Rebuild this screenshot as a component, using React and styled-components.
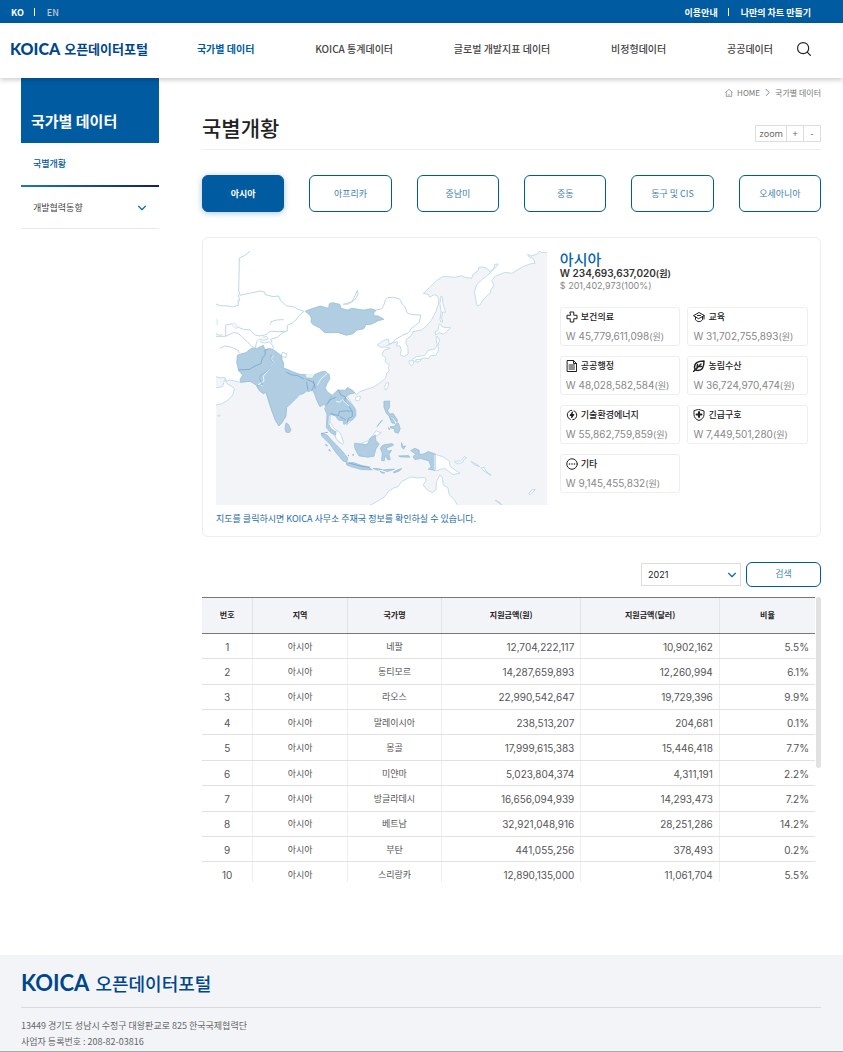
import React, { useState } from 'react'
import styled, { createGlobalStyle, css } from 'styled-components'

const noto = '"Noto Sans CJK KR", "Noto Sans", sans-serif'
const inter = 'Inter, "Noto Sans CJK KR", sans-serif'

const GlobalStyle = createGlobalStyle`
* { box-sizing: border-box; }
body {
    margin: 0;
    background: #fff;
    color: #555;
    font-family: ${noto};
    font-size: 9px;
    line-height: 16px;
}
a { color: inherit; text-decoration: none; }
button, select { font: inherit; margin: 0; cursor: pointer; }
ul, h1, h2, h3, p { margin: 0; padding: 0; list-style: none; }
`

const TopBar = styled.div`
display: flex;
justify-content: space-between;
align-items: center;
height: 23px;
padding: 2px 32px 0 11px;
background: #005ba1;
color: #fff;
font-weight: 700;
`
const TopLinks = styled.div`
display: flex;
align-items: center;
`
const TopLink = styled.a`
color: ${props => props.$dim ? '#c3c8cc' : '#fff'};
font-weight: ${props => props.$dim ? 500 : 700};
`
const Divider = styled.span`
width: 1px;
height: 8px;
margin: 0 12px 2px 10px;
background: #fff;
`
const Header = styled.header`
position: relative;
display: flex;
align-items: center;
height: 55px;
padding: 0 32px 3px 10px;
background: #fff;
box-shadow: 0 2px 5px rgba(0, 0, 0, 0.2);
`
const Logo = styled.a`
display: flex;
align-items: center;
gap: ${props => props.$large ? 6 : 4}px;
color: #00468c;
font-weight: ${props => props.$large ? 500 : 700};
font-size: ${props => props.$large ? 18 : 13}px;
line-height: 24px;
white-space: nowrap;

b {
    font-family: Lato, sans-serif;
    font-size: ${props => props.$large ? 22 : 16}px;
}
`
const Nav = styled.nav`
display: flex;
flex: 1;
justify-content: space-between;
margin: 0 24px 0 49px;
font-size: 10px;
white-space: nowrap;
`
const NavLink = styled.a`
color: ${props => props.$active ? '#005ba1' : '#444'};
font-weight: ${props => props.$active ? 700 : 500};
`
const IconButton = styled.button`
display: flex;
padding: 0;
border: 0;
background: none;
color: #222;
`
const Page = styled.div`
display: grid;
grid-template-columns: 138px minmax(0, 1fr);
gap: 43px;
padding: 0 22px 0 21px;
`
const SideTitle = styled.h2`
height: 65px;
padding: 31px 10px 0;
background: #005ba1;
color: #fff;
font-size: 15px;
line-height: 24px;
`
const SideLink = styled.a`
display: flex;
justify-content: space-between;
align-items: center;
height: 42px;
padding: 0 13px 0 12px;
border-bottom: 1px solid #e9e9e9;
color: #444;

${props => props.$active && css`
    height: 44px;
    border-bottom: 2px solid;
    border-image: linear-gradient(90deg, #1b76ce, #141f5e) 1;
    color: #005ba1;
    font-weight: 500;
`}
`
const Breadcrumb = styled.nav`
display: flex;
justify-content: flex-end;
align-items: center;
gap: 4px;
height: 29px;
color: #777;
font-size: 8px;
`
const TitleRow = styled.div`
display: flex;
justify-content: space-between;
align-items: flex-end;
height: 43px;
padding-bottom: 7px;
border-bottom: 1px solid #eee;
`
const Title = styled.h1`
padding-bottom: 1px;
color: #222;
font-size: 21px;
font-weight: 500;
line-height: 28px;
`
const ZoomBox = styled.div`
display: flex;
height: 17px;
border: 1px solid #ddd;
color: #666;
font-family: "Noto Sans", sans-serif;
line-height: 16px;

span { padding: 0 3px; }
button {
    width: 17px;
    padding: 0;
    border: 0;
    border-left: 1px solid #ddd;
    background: none;
    color: #666;
}
`
const Tabs = styled.div`
display: grid;
grid-template-columns: repeat(6, 1fr);
gap: 25px;
margin: 25px 0;
`
const Tab = styled.button`
height: 37px;
padding: 0;
border: 1px solid #005ba1;
border-radius: 6px;
background: ${props => props.$active ? '#005ba1' : '#fff'};
color: ${props => props.$active ? '#fff' : '#3f82b5'};
font-weight: ${props => props.$active ? 700 : 400};
box-shadow: ${props => props.$active ? '0 1px 6px rgba(0, 91, 161, 0.35)' : 'none'};
`
const Overview = styled.section`
display: grid;
grid-template-columns: 4fr 3fr;
gap: 13px;
padding: 13px 12px 9px 13px;
border: 1px solid #eee;
border-radius: 6px;
`
const MapSvg = styled.svg`
display: block;
width: 100%;
background: #f3f4f8;
`
const MapNote = styled.p`
margin-top: 6px;
color: #1d6dab;
`
const RegionName = styled.h2`
color: #0b67ac;
font-size: 15px;
font-weight: 500;
line-height: 16px;
`
const Total = styled.p`
color: ${props => props.$sub ? '#888' : '#333'};
font-family: ${inter};
font-size: ${props => props.$sub ? 9 : 10}px;
font-weight: ${props => props.$sub ? 400 : 600};
line-height: 12px;

small { font-size: 9px; }
`
const SectorGrid = styled.div`
display: grid;
grid-template-columns: 1fr 1fr;
gap: 10px 7px;
margin-top: 15px;
`
const SectorCard = styled.div`
height: 39px;
padding: 1px 5px;
border: 1px solid #eee;
border-radius: 3px;

h3 {
    display: flex;
    align-items: center;
    gap: 3px;
    color: #222;
    font-size: 9px;
    font-weight: 500;
    line-height: 16px;
}
p {
    margin-top: 3px;
    color: #888;
    font-family: ${inter};
    font-size: 10px;
    line-height: 16px;
}
small { font-size: 9px; }
`
const Filter = styled.form`
display: flex;
justify-content: flex-end;
align-items: center;
gap: 5px;
margin: 25px 0 10px;
`
const SelectWrap = styled.label`
position: relative;
width: 100px;

svg {
    position: absolute;
    right: 5px;
    top: 8px;
    pointer-events: none;
}
`
const Select = styled.select`
display: block;
width: 100%;
height: 23px;
padding: 1px 6px 0;
border: 1px solid #ddd;
border-radius: 0;
background: #fff;
appearance: none;
color: #222;
font-family: ${inter};
`
const SearchButton = styled.button`
width: 75px;
height: 25px;
border: 1px solid #005ba1;
border-radius: 6px;
background: #fff;
color: #4787b5;
`
const TableArea = styled.div`
display: flex;
gap: 1px;
height: 285px;
`
const Scroller = styled.div`
flex: 1;
overflow-y: auto;
scrollbar-width: none;
`
const ScrollThumb = styled.div`
width: 5px;
height: 60%;
border-radius: 3px;
background: #e1e1e1;
`
const Table = styled.table`
width: 100%;
height: 291px;
border-collapse: collapse;
table-layout: fixed;
font-family: ${inter};
line-height: 12px;

th {
    height: 36px;
    padding: 0;
    border-top: 1px solid #777;
    border-bottom: 1px solid #777;
    background: #f3f4f8;
    color: #222;
    font-family: ${noto};
    font-size: 8px;
    font-weight: 700;
}
td {
    padding: 1px 6px 0;
    border-bottom: 1px solid #e1e1e1;
    text-align: center;
    font-size: 10px;
}
th + th, td + td { border-left: 1px solid #e4e4e8; }
td + td { border-left-color: #eee; }
td:nth-child(2), td:nth-child(3) { font-size: 9px; }
td:nth-child(n + 4) { text-align: right; }
`
const Footer = styled.footer`
height: 97px;
margin-top: 73px;
padding: 16px 22px 0 21px;
border-bottom: 1px solid #aaa;
background: #f3f4f8;
color: #666;
`
const Address = styled.div`
margin-top: 12px;
padding-top: 10px;
border-top: 1px solid #d8dade;
font-size: 9px;
line-height: 16px;
`

const Line = ({ size = 12, children, width = 2 }) => (
    <svg width={size} height={size} viewBox="0 0 24 24" fill="none" stroke="currentColor" strokeWidth={width} strokeLinejoin="round" strokeLinecap="round" aria-hidden="true">
        {children}
    </svg>
)

const Chevron = () => (
    <Line size={8} width={4}><path d="M2 7l10 10L22 7" stroke="#1470b3" /></Line>
)

const icons = {
    health: <path d="M8.500 2h7v6.500H22v7h-6.500V22h-7v-6.500H2v-7h6.500z" />,
    edu: <><path d="M1.500 9L12 3l10.500 6L12 15z" /><path d="M5 12v5.500c4 5 10 5 14 0V12M22 9v7M9 9h6" /></>,
    admin: <><path d="M3 1h12l6 6v16H3zM15 1v6h6" /><path d="M6 10h11M6 14h11M6 18h11" /></>,
    farm: <><path d="M22 2C9 2 3 6 3 14c0 4 3 7 7 7 8 0 12-7 12-19z" strokeWidth="3" /><path d="M1 23L16 8M8 16l1-7M11 13h6" strokeWidth="3" /></>,
    energy: <><circle cx="12" cy="12" r="9.500" strokeDasharray="25 5" strokeDashoffset="12" /><path d="M13 6l-5 7h4l-1 5 5-7h-4z" fill="currentColor" /></>,
    rescue: <><path d="M12 1l10 3v7c0 6-4 10-10 12C6 21 2 17 2 11V4z" /><path d="M12 6v10M7 11h10" strokeWidth="4" /></>,
    etc: <><circle cx="12" cy="12" r="10.500" /><path d="M7 12h.1M12 12h.1M17 12h.1" strokeWidth="3" /></>,
}

const sectors = [
    ['health', '보건의료', '45,779,611,098'],
    ['edu', '교육', '31,702,755,893'],
    ['admin', '공공행정', '48,028,582,584'],
    ['farm', '농림수산', '36,724,970,474'],
    ['energy', '기술환경에너지', '55,862,759,859'],
    ['rescue', '긴급구호', '7,449,501,280'],
    ['etc', '기타', '9,145,455,832'],
]

const rows = [
    ['네팔', '12,704,222,117', '10,902,162', '5.5%'],
    ['동티모르', '14,287,659,893', '12,260,994', '6.1%'],
    ['라오스', '22,990,542,647', '19,729,396', '9.9%'],
    ['말레이시아', '238,513,207', '204,681', '0.1%'],
    ['몽골', '17,999,615,383', '15,446,418', '7.7%'],
    ['미얀마', '5,023,804,374', '4,311,191', '2.2%'],
    ['방글라데시', '16,656,094,939', '14,293,473', '7.2%'],
    ['베트남', '32,921,048,916', '28,251,286', '14.2%'],
    ['부탄', '441,055,256', '378,493', '0.2%'],
    ['스리랑카', '12,890,135,000', '11,061,704', '5.5%'],
]

const columns = [['번호', '8.3%'], ['지역', '15.4%'], ['국가명', '15.4%'], ['지원금액(원)', '22.7%'], ['지원금액(달러)', '22.6%'], ['비율', '15.6%']]

const regions = ['아시아', '아프리카', '중남미', '중동', '동구 및 CIS', '오세아니아']

const AsiaMap = () => (
    <MapSvg viewBox="18 33 993 762" role="img" aria-label="아시아">
        <g fill="#fff" stroke="#c4dcec" strokeWidth="3" strokeLinejoin="round">
            {/* mainland */}
            <path d="M10 20H1020V38L995 37 988 34 982 42 965 48 953 43 957 50 970 55 976 70 960 72 940 80 922 90 907 100 885 97 870 104 857 108 845 122 853 135 843 150 841 160 830 168 820 180 810 195 802 198 798 180 794 155 800 135 815 120 830 108 842 98 860 80 865 72 855 73 852 85 840 95 832 85 818 81 807 82 805 92 790 102 785 115 765 112 755 107 735 112 700 109 680 122 660 142 640 160 655 163 660 172 670 165 680 165 687 178 685 195 678 215 665 240 650 258 635 270 620 273 608 275 606 285 590 298 588 310 594 322 595 342 582 350 571 345 574 330 570 318 560 318 563 306 548 308 538 312 535 297 520 302 502 315 512 322 528 321 541 325 522 331 516 344 528 355 525 365 538 374 535 385 538 392 530 402 527 415 515 425 505 432 490 442 470 448 450 455 440 464 432 457 424 458 412 470 425 490 438 510 438 530 425 542 410 555 405 545 395 540 385 530 370 525 362 520 360 545 372 565 390 580 400 605 398 612 385 605 372 585 358 565 358 540 357 520 350 500 345 490 330 500 322 480 315 460 305 450 290 455 272 465 255 480 240 495 228 505 228 530 215 550 207 558 195 540 185 510 175 480 168 458 160 462 148 452 138 435 120 424 90 427 72 423 60 420 50 424 45 412 30 414 10 408z" />
            <path d="M10 445L38 440 44 418 50 430 74 446 68 465 55 480 35 492 10 497z" />
            {/* Sakhalin, Japan, Taiwan, Hainan */}
            <path d="M693 168l5 3 1 20 8 26-9-1-3 18 4 12-6 0-3-8 4-22-4-25z" />
            <path d="M688 252l12 10 22 1-11 11-9 9-14-5-10 7-3-9 9-4z" />
            <path d="M681 288l8 12-5 17 2 14-8 15-16 1-6 9-14-2-12 5-16 6-7-6 12-9 25-3 11-16 20-4 7-12-3-16z" />
            <path d="M597 363l12-1 2 8-7 8-6-8zM618 359l17-1-5 6-12 3z" />
            <path d="M528 430l8-2-1 11-7 12-5-8zM436 473l9-5 8 3-5 10-9 2z" />
            {/* Malaysia, Brunei */}
            <path d="M455 610l20-8 15-17 8-13 16 7-12 8-14 4-12 19-14 5z" />
            <path d="M373 575l10-2 9 8 9 28-4 4-18-16z" />
            {/* Papua New Guinea, Solomons, Pacific islands */}
            <path d="M675 643l25 8 19 13 2 16 29 20-21 4-24-18-13 2-12 5-5-5z" />
            <path d="M735 664l18-1 10-13 8 4-8 3-4 10-14 5-9-4z" />
            <path d="M784 665l15 8 10 7-17-6zM814 684l9-1 7 13 14 10-9-4-14-10zM958 760l7-9 11-3-7 9-10 8zM856 781l14 7 10 11z" strokeWidth="2" stroke="#a5c9e1" />
            {/* Australia */}
            <path d="M478 798l25-14 22-14 10-15 15-10 15-5 10-15 20-10 10-4 15 3 25-1 4 7-9 16 13 15 14 7 11-7 2-26 10-20 8 10 2 20 14 8 4 21 15 16 12 18z" />
        </g>
        <g fill="#b0cde1" stroke="#8fb9d7" strokeWidth="2" strokeLinejoin="round">
            {/* Mongolia */}
            <path d="M286 214l19-8 26-8 25 7 2-14 10-3 22 5 3 12 20 5 13-5 35 5 22-4 15 5-7 9 2 7 12 1 17 10-16 4-22 11-16 1-7 13-19 3-14 12-19 4-24-8h-41l-15-14-21-11-5-8 1-11-5-9z" />
            {/* South Asia, Myanmar */}
            <path d="M82 346L92 342 108 338 124 325 142 325 160 316 165 330 178 325 190 329 202 338 216 348 216 358 222 372 220 384 232 388 250 396 270 403 288 404 290 414 308 414 314 404 332 396 346 394 358 404 360 416 352 430 346 444 352 456 362 462 368 470 356 484 354 498 346 496 340 494 330 500 320 480 314 462 306 446 298 455 288 452 282 460 268 464 255 478 240 492 230 502 228 528 216 548 207 558 197 542 186 514 176 484 168 456 160 461 148 452 140 436 122 424 92 427 90 418 98 406 86 392 80 368z" />
            <path d="M228 549l8 5 7 16-5 8-10-1-3-12z" />
            {/* Indochina */}
            <path d="M351 490l17-25 15-15 23 1 6-8 16 8 7 8-20 4-8 10 16 18 12 15 2 21-9 12-14 6-12 9-3-12-13-1-9-13-17-5-5 7-1 23 12 15 12 8-1 9-13-5-15-17 2-40-7-16z" />
            {/* Indonesia */}
            <path d="M334 580l17 5 18 20 17 17 13 14 14 18-2 14-12-5-22-26-16-23-25-25zM410 669l21-1 22 8 24 6 10 8-33-1-32-9-12-5zM434 610l20 2 17 3 10-20 15-10 2 17 10 10-10 15-6 22-19 3-26-4-8-14-5-12zM517 617l8-3 22-3 4 5-21 8 2 10 13-3-8 13 4 15-7 1-8-14-3 17-8-1 2-22-6-14zM489 686l14 0 14 3-14 2zM510 694l15 5-8 1zM519 690l20-2 15 0-22 7zM550 697l15-8 11-3-9 8-15 5zM347 612l6 6-4 0zM357 628l5 5-5 0zM575 608l4 12 8-2-6 10-6-7zM566 648l30-1 4 5-29-1z" />
            <path d="M602 632l13-7 13 6 0 12 11 0 16-8 21 7v50l-21-4 9-7-7-18-24-7-18 3-6-9 9-7z" />
            {/* Philippines */}
            <path d="M522 484l17-1 0 18-6 12 8 9 9-1 13 20-2 7-11-15-13-4-9-11-6-17zM538 531l10 6 7 14-9-2zM541 560l11 0 9-11 5 2 5 16-6 13-10-3-3-11-11-2zM518 540l-15 18-2 2 8-11zM536 563l4 5-3 1z" />
            <path d="M414 646l3 2M428 643l3 4" strokeWidth="4" />
        </g>
        {/* northern and central borders */}
        <g fill="none" stroke="#bcd7e9" strokeWidth="3" strokeLinejoin="round">
            <path d="M120 34L105 46 88 54 87 110 86 150 90 166 119 160 153 153 165 157 165 164 190 170 206 168 212 182 230 198 250 200 262 207 282 214 268 226 258 240 246 250 232 256 232 272 215 280 203 292 182 298 186 308" />
            <path d="M18 192l12 5 24 1 13 3 18-5-1-14 5 0-4-18" />
            <path d="M232 274L205 275 180 274 168 284 150 288 136 286 120 270 100 268 85 262 65 252 47 255V289L70 278 85 280 98 293 112 305 126 320 136 324 140 306 148 298 162 301 175 296 170 290 158 292M18 289L47 289M30 325L45 318 65 322 85 332 88 340M18 281l10 5 8-2M150 305l14 4 14-3 10 10 2 10" />
            <path d="M182 254l1-9 18-5 20-1M214 345l4-8 12 5-2 10-10-1" />
            <path d="M400 193l25-7 10-18 8-18 1 14-10 16-18 12zM498 210l17-3 7-12 5-17 6-5 18-1 18 5 8 15 8 8 7 19 14 5 27 1-5 22-10 8-14 11-8 12-18 8-21 12-10 12-17 7" />
        </g>
        <g fill="none" stroke="#699fc7" strokeWidth="2" strokeLinejoin="round">
            <path d="M84 390l35-2 16-10 18-7 4-16 9-12-1-13 9-2M228 396l18 9 17 2 20 11M290 418l18 8 6 8-10 20M290 426l4 25M310 422l6 25M352 493l9-14 17-7M385 450l8 15 13 6-1 12 12 16 10 15 0 16-12 6-4 17M362 520l8 3 16 4 2-12 18-2 20 1M416 669l37 10 28 3M390 530l17 10M354 577l-20 4" />
        </g>
        <path d="M191 348l-8 7 9 15-17 21-15 18 2 15-18 10 13 3M352 400l-20 18-10 18M378 484l11 3 8-8 20 19M675 644v47" fill="none" stroke="#eaf4fa" strokeWidth="3" />
        <path d="M183 345l0 14 9 12-18 20-24 17 0 12 8 13-18 6" fill="none" stroke="#84b1d2" strokeWidth="2" />
        <path d="M18 238l6 3-1 12-5 2M64 250l14 0 5 15-11 0zM286 404l22 0 0 9-18 0z" fill="#f0f5f9" stroke="#bcd7e9" />
        <path d="M22 527l6-2 4 2-6 2z" fill="none" stroke="#bcd7e9" strokeWidth="2" />
    </MapSvg>
)

export default function App() {
    const [region, setRegion] = useState('아시아')

    return (
        <>
            <GlobalStyle />
            <TopBar>
                <TopLinks>
                    <TopLink href="#ko">KO</TopLink>
                    <Divider />
                    <TopLink href="#en" $dim>EN</TopLink>
                </TopLinks>
                <TopLinks>
                    <TopLink href="#guide">이용안내</TopLink>
                    <Divider />
                    <TopLink href="#chart">나만의 차트 만들기</TopLink>
                </TopLinks>
            </TopBar>
            <Header>
                <Logo href="#home"><b>KOICA</b>오픈데이터포털</Logo>
                <Nav>
                    <NavLink href="#country" $active>국가별 데이터</NavLink>
                    <NavLink href="#stats">KOICA 통계데이터</NavLink>
                    <NavLink href="#global">글로벌 개발지표 데이터</NavLink>
                    <NavLink href="#raw">비정형데이터</NavLink>
                    <NavLink href="#public">공공데이터</NavLink>
                </Nav>
                <IconButton aria-label="검색">
                    <Line size={14} width={2}><circle cx="10.500" cy="10.500" r="9.500" /><path d="M17.500 17.500L23 23" /></Line>
                </IconButton>
            </Header>
            <Page>
                <aside>
                    <SideTitle>국가별 데이터</SideTitle>
                    <SideLink href="#overview" $active>국별개황</SideLink>
                    <SideLink href="#trend">개발협력동향<Chevron /></SideLink>
                </aside>
                <main>
                    <Breadcrumb>
                        <Line size={8} width={2}><path d="M2 10L12 1l10 9M4 9v14h16V9M9 18h6" /></Line>
                        <a href="#home">HOME</a>
                        <Line size={7} width={3}><path d="M7 1l11 11L7 23" /></Line>
                        <a href="#country">국가별 데이터</a>
                    </Breadcrumb>
                    <TitleRow>
                        <Title>국별개황</Title>
                        <ZoomBox>
                            <span>zoom</span>
                            <button>+</button>
                            <button>-</button>
                        </ZoomBox>
                    </TitleRow>
                    <Tabs>
                        {regions.map(name => (
                            <Tab key={name} $active={name === region} onClick={() => setRegion(name)}>{name}</Tab>
                        ))}
                    </Tabs>
                    <Overview>
                        <div>
                            <AsiaMap />
                            <MapNote>지도를 클릭하시면 KOICA 사무소 주재국 정보를 확인하실 수 있습니다.</MapNote>
                        </div>
                        <div>
                            <RegionName>아시아</RegionName>
                            <Total>W 234,693,637,020<small>(원)</small></Total>
                            <Total $sub>$ 201,402,973(100%)</Total>
                            <SectorGrid>
                                {sectors.map(([icon, name, amount]) => (
                                    <SectorCard key={name}>
                                        <h3><Line>{icons[icon]}</Line>{name}</h3>
                                        <p>W {amount}<small>(원)</small></p>
                                    </SectorCard>
                                ))}
                            </SectorGrid>
                        </div>
                    </Overview>
                    <Filter onSubmit={e => e.preventDefault()}>
                        <SelectWrap>
                            <Select aria-label="연도" defaultValue="2021">
                                <option>2021</option>
                            </Select>
                            <Chevron />
                        </SelectWrap>
                        <SearchButton type="submit">검색</SearchButton>
                    </Filter>
                    <TableArea>
                        <Scroller>
                            <Table>
                                <colgroup>
                                    {columns.map(([name, width]) => <col key={name} width={width} />)}
                                </colgroup>
                                <thead>
                                    <tr>{columns.map(([name]) => <th key={name} scope="col">{name}</th>)}</tr>
                                </thead>
                                <tbody>
                                    {rows.map((row, i) => (
                                        <tr key={row[0]}>
                                            <td>{i + 1}</td>
                                            <td>아시아</td>
                                            {row.map(cell => <td key={cell}>{cell}</td>)}
                                        </tr>
                                    ))}
                                </tbody>
                            </Table>
                        </Scroller>
                        <ScrollThumb />
                    </TableArea>
                </main>
            </Page>
            <Footer>
                <Logo href="#home" $large><b>KOICA</b>오픈데이터포털</Logo>
                <Address>
                    <p>13449 경기도 성남시 수정구 대왕판교로 825 한국국제협력단</p>
                    <p>사업자 등록번호 : 208-82-03816</p>
                </Address>
            </Footer>
        </>
    )
}
